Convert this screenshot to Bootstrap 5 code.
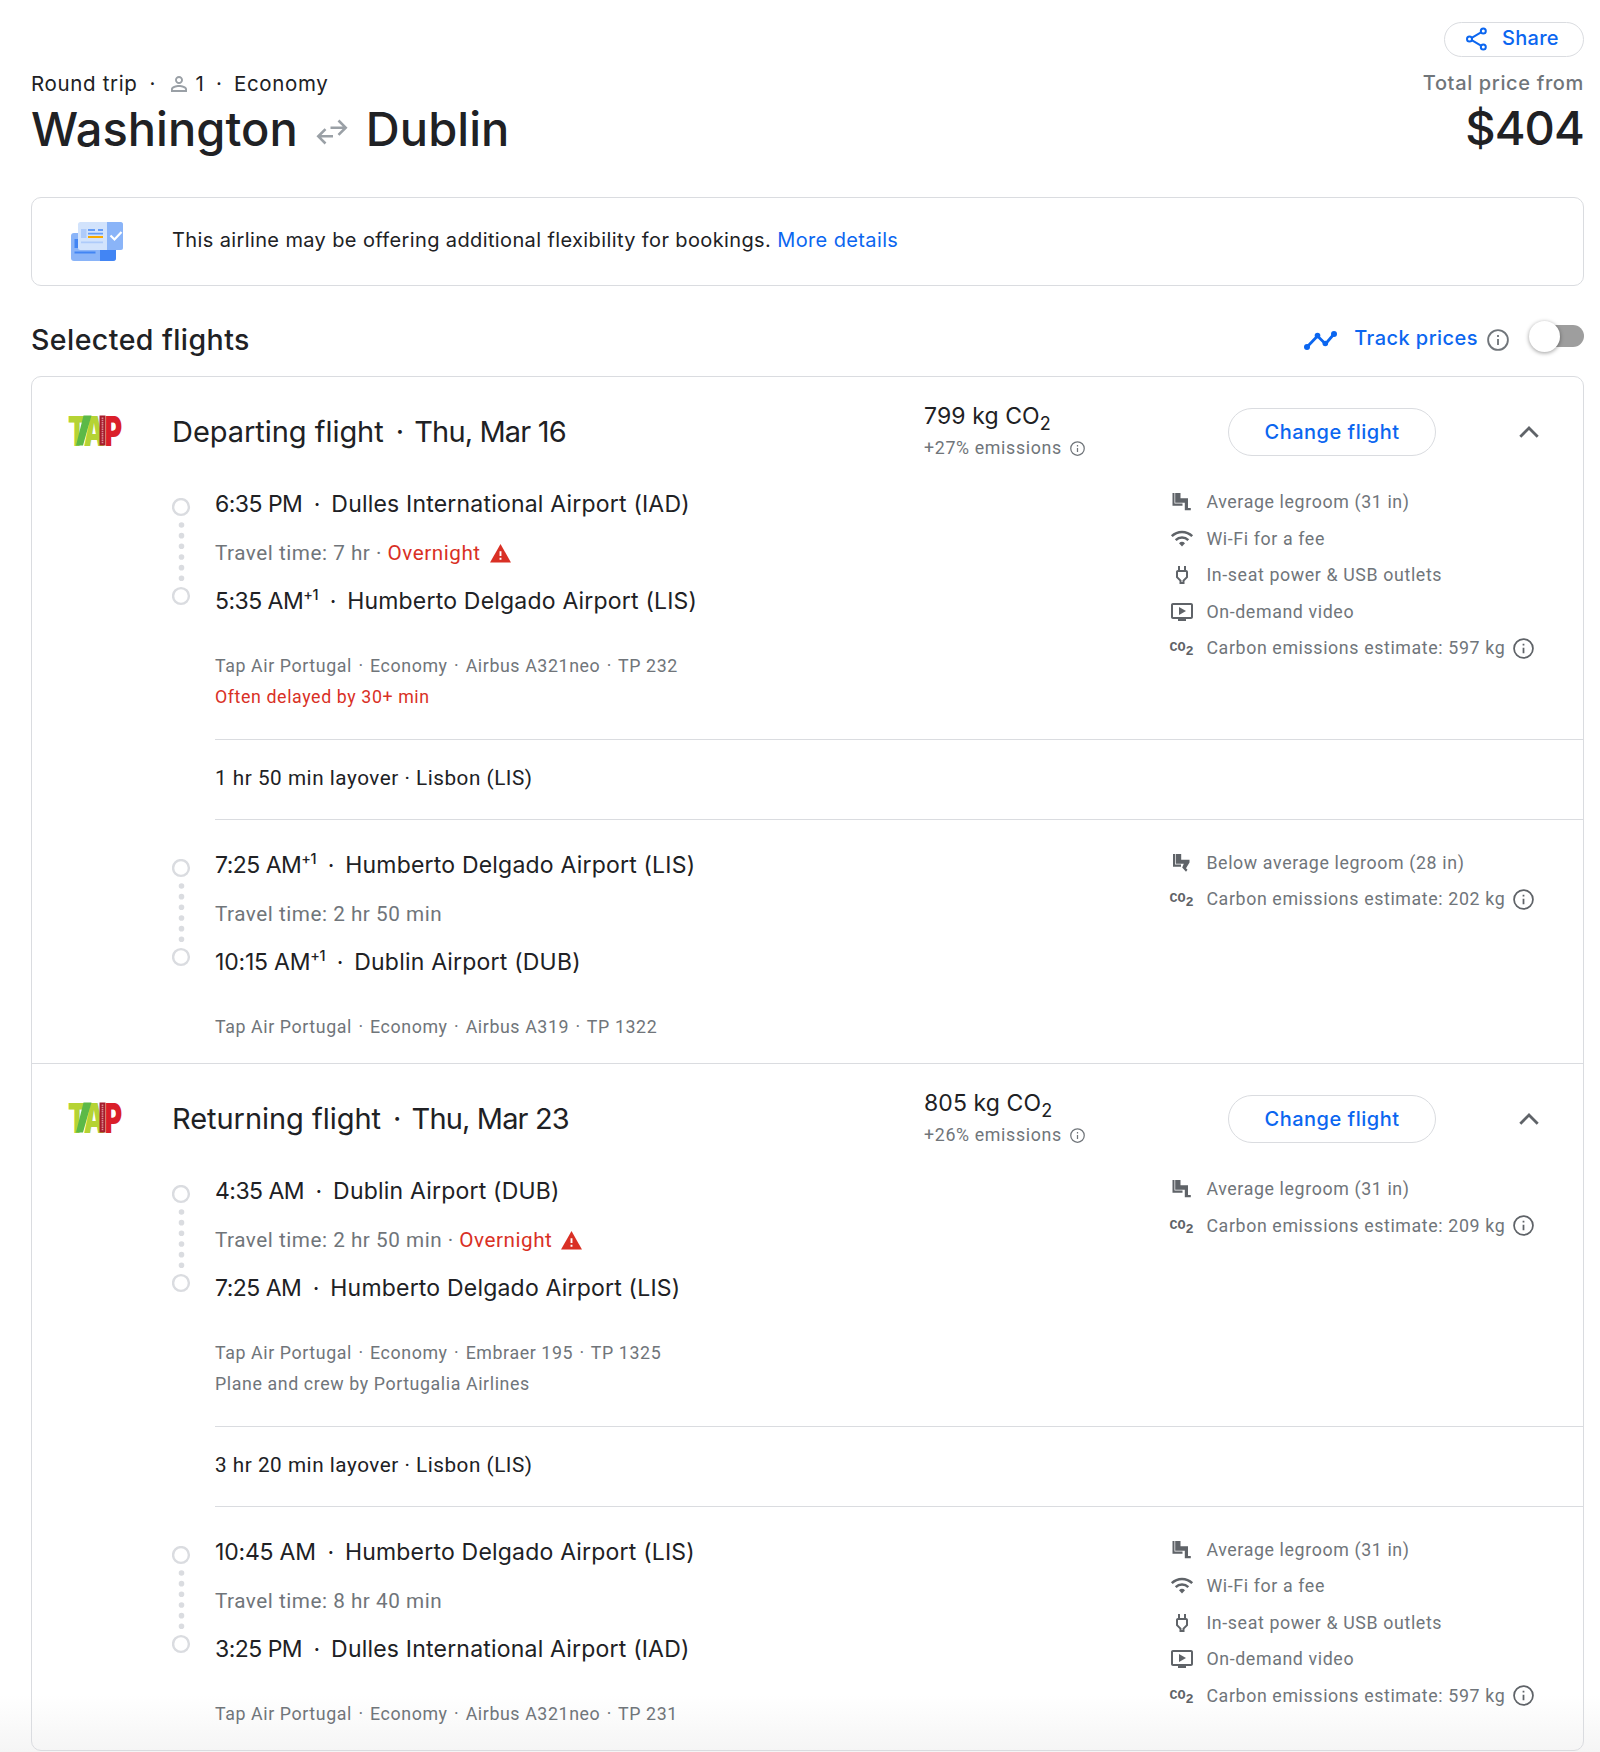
<!DOCTYPE html>
<html lang="en">
<head>
<meta charset="utf-8">
<meta name="viewport" content="width=device-width, initial-scale=1">
<title>Washington to Dublin</title>
<link href="https://cdn.jsdelivr.net/npm/bootstrap@5.3.0/dist/css/bootstrap.min.css" rel="stylesheet">
<style>
body{font-family:Roboto,"Liberation Sans",sans-serif;color:#202124;height:1752px;overflow:hidden;background:linear-gradient(#fff 1695px,#f5f5f5 1752px)}
svg{display:block;flex:none;overflow:visible}
.page{padding:0 16px 0 31px}
.gs{font-family:Inter,"Liberation Sans",sans-serif}
.sp{white-space:pre}
.blue{color:#0b66f0}
.grey{color:#70757a}
.red{color:#d93025}
.outline{border:1px solid #dadce0}
.topbar{height:158px}
.left-col{padding-top:69px}
.trip-line{font-size:20.5px;line-height:29px;height:29.5px;letter-spacing:.65px}
.trip-line .sp{letter-spacing:.2px}
.trip-line .pax{margin:3px 4px 0 0}
.big{font-size:47px;line-height:60px;font-weight:500;letter-spacing:.05px}
.big.price{letter-spacing:-.9px}
.swap{margin:20px 19px 0 19px}
.right-col{padding-top:21.5px}
.share-btn{width:140px;height:37px;border-radius:19px;padding-left:21px;font-size:20px;font-weight:500;letter-spacing:.3px}
.share-btn span{margin:-3px 0 0 15px}
.total{font-size:20px;line-height:29px;margin-top:12px;font-weight:500;letter-spacing:.64px}
.notice{margin-top:39px;height:89px;border-radius:10px;padding-left:39px;font-size:20px;line-height:30px;letter-spacing:.38px}
.notice .msg{margin:-3px 0 0 49px}
.sel{height:90px;padding-top:17px}
.sel h2{font-size:28.5px;line-height:40px;font-weight:500;letter-spacing:.45px;padding-top:17px}
.trend{margin:28px 17px 0 0}
.track-t{font-size:20px;font-weight:500;line-height:30px;margin-top:20px;letter-spacing:.45px}
.track-i{margin:26px 20px 0 9px}
.switch{width:55px;height:30px;position:relative;margin-top:18px}
.switch i{position:absolute;right:0;top:4px;width:44px;height:22px;border-radius:11px;background:#9e9e9e}
.switch b{position:absolute;left:0;top:0;width:31px;height:31px;border-radius:50%;background:#fff;box-shadow:0 1px 4px rgba(0,0,0,.4)}
.flights{border-radius:10px}
.flight{height:686px}
.flight+.flight{border-top:1px solid #dadce0;height:687px}
.head{height:109px;padding:31px 39px 0 37px}
.logo-cell{width:103px;padding-top:7px}
.logo-cell text{font:900 41px Inter,"Liberation Sans",sans-serif}
.head h3{width:752px;font-size:29px;line-height:40px;font-weight:400;letter-spacing:-.04px;padding-top:4px}
.head h3 i{font-style:normal;margin:0 2px 0 4px}
.head h3 b{font-weight:400;letter-spacing:-.85px}
.co{width:304px;padding-top:3px}
.co .kg{font-size:23px;line-height:26px;letter-spacing:.1px;margin-top:-8px}
.co .kg sub{font-size:18px;bottom:-.32em}
.pct{font-size:17.8px;line-height:30px;letter-spacing:.65px;margin-top:4px}
.change{width:208px;height:48px;border-radius:24px;font-size:20px;font-weight:500;line-height:46px;letter-spacing:.5px}
.chev{margin:17.500px 0 0 82.500px}
.seg{height:253px;padding-left:140px}
.seg.second{padding-top:26.500px;height:243px}
.track{width:43px;padding-top:12px}
.info-col{width:955px}
.stop{font-size:23px;line-height:36px;letter-spacing:.2px}
.stop>span{letter-spacing:-.53px}
.stop>.wide{letter-spacing:-.2px}
.stop>i{font-style:normal;letter-spacing:-.7px}
.stop sup{font-size:14.500px;top:-.6em;font-weight:500;letter-spacing:-.4px}
.travel{font-size:20.7px;line-height:36px;letter-spacing:.52px;margin:13px 0 12px}
.warn{margin-left:9px}
.meta{font-size:17.8px;line-height:30.7px;letter-spacing:.6px}
.meta i{font-style:normal;margin:0 1.400px}
.stop+.meta{margin-top:32px}
.lay{height:81px;margin-left:183px;border:solid #dadce0;border-width:1px 0;font-size:20.7px;line-height:77px;letter-spacing:.53px}
.am{margin-top:-2px;font-size:17.8px;letter-spacing:.62px;color:#70757a}
.am>div{height:36.5px;line-height:36.5px}
.am svg{color:#5f6368}
.am .ic{width:24px;margin:0 12px 0 .4px}
.co2{font:700 13.5px/36px "Liberation Mono",monospace;letter-spacing:0;color:#5f6368;white-space:nowrap;text-indent:-1px}
.co2 sub{font-size:13.5px;bottom:-4px;line-height:0}
</style>
</head>
<body>
<svg width="0" height="0" class="position-absolute">
<symbol id="i-info" viewBox="0 0 24 24"><circle cx="12" cy="12" r="10.8" fill="none" stroke="currentColor" stroke-width="2"/><path d="M11 11h2v6.500h-2zM11 6.500h2v2.200h-2z" fill="currentColor"/></symbol>
<symbol id="i-seat" viewBox="0 0 24 24"><path fill="currentColor" d="M2.500 3h2v10.500h8v2.200h-10zM5.200 3H10.500v5.300h7.500V18h2.800v2.200h-6v-7.500H5.200z"/></symbol>
<symbol id="i-low" viewBox="0 0 24 24"><path fill="currentColor" d="M3 3h2v10.500h6v2.200H3zM5.700 3h5.500v5.800h8.300v2.700L16 17.200l1.500 1.600L16 20.800 12.200 16.500l1.600-3.800H5.700z"/></symbol>
<symbol id="i-wifi" viewBox="0 0 24 24"><path d="M1.800 9.100a14.500 14.500 0 0 1 20.400 0M5.700 13.100a9 9 0 0 1 12.600 0" fill="none" stroke="currentColor" stroke-width="2.500"/><path d="M12 19.500l-3-3.200a4.300 4.300 0 0 1 6 0z" fill="currentColor"/></symbol>
<symbol id="i-plug" viewBox="0 0 24 24"><path fill="currentColor" d="M16 9v4.660l-3.500 3.510V19h-1v-1.830L8 13.650V9h8m0-6h-2v4h-4V3H8v4h-.01C6.900 6.990 6 7.890 6 8.980v5.520L9.500 18v3h5v-3l3.500-3.510V9c0-1.100-.9-2-2-2V3z"/></symbol>
<symbol id="i-video" viewBox="0 0 24 24"><path fill="currentColor" d="M21 3H3c-1.110 0-2 .89-2 2v12c0 1.100.89 2 2 2h5v2h8v-2h5c1.100 0 1.990-.9 1.990-2L23 5c0-1.110-.9-2-2-2zm0 14H3V5h18v12zm-5-6l-7 4V7z"/></symbol>
<symbol id="i-warn" viewBox="0 0 22 20"><path fill="#d93025" d="M11 0l11 19.500H0z"/><path fill="#fff" d="M10 7.500h2v5h-2zM10 14.500h2v2h-2z"/></symbol>
<symbol id="i-up" viewBox="0 0 20 12"><path d="M1.300 10.700L10 2l8.700 8.700" fill="none" stroke="#5f6368" stroke-width="2.800"/></symbol>
<symbol id="i-line" viewBox="0 0 20 108"><g fill="none" stroke="#dadce0" stroke-width="2.400"><circle cx="9" cy="9" r="7.900"/><circle cx="9" cy="98" r="7.900"/></g><path d="M9.500 27v54" stroke="#dadce0" stroke-width="5.600" stroke-linecap="round" stroke-dasharray="0 10.660"/></symbol>
</svg>
<main class="page">
<header class="topbar d-flex justify-content-between gs">
 <div class="left-col">
  <div class="trip-line d-flex"><span>Round trip</span><span class="sp">  ·  </span><svg class="pax" width="24" height="24" viewBox="0 0 24 24"><path fill="#9aa0a6" d="M12 5.900c1.160 0 2.100.94 2.100 2.100s-.94 2.100-2.100 2.100S9.900 9.160 9.900 8s.94-2.100 2.100-2.100m0 9c2.970 0 6.100 1.460 6.100 2.100v1.100H5.900V17c0-.64 3.130-2.100 6.100-2.100M12 4C9.790 4 8 5.790 8 8s1.790 4 4 4 4-1.790 4-4-1.790-4-4-4zm0 9c-2.670 0-8 1.340-8 4v3h16v-3c0-2.660-5.330-4-8-4z"/></svg><span class="sp">1  ·  </span><span>Economy</span></div>
  <h1 class="big m-0 d-flex">Washington<svg class="swap" width="30" height="25" viewBox="0 0 30 25"><path fill="none" stroke="#9aa0a6" stroke-width="2.600" d="M13.500 8.700H28M21.500 1.500l7.200 7.200-7.200 7.200M16 17.300H2M8.500 10.100l-7.200 7.200 7.200 7.200"/></svg>Dublin</h1>
 </div>
 <div class="right-col d-flex flex-column align-items-end">
  <a class="share-btn outline blue text-decoration-none d-flex align-items-center" href="#"><svg width="21" height="24" viewBox="0 0 21 24"><g fill="none" stroke="currentColor" stroke-width="2"><circle cx="3.500" cy="12" r="2.500"/><circle cx="17.300" cy="4" r="2.500"/><circle cx="17.300" cy="20" r="2.500"/><path d="M5.700 10.800L15 5.400M5.700 13.200l9.300 5.400"/></g></svg><span>Share</span></a>
  <div class="grey total">Total price from</div>
  <div class="big price">$404</div>
 </div>
</header>
<section class="notice outline d-flex align-items-center gs">
 <svg width="52" height="39" viewBox="0 0 52 39"><rect y="11" width="45" height="28" rx="3" fill="#8ab4f8"/><path d="M29 28h16v8a3 3 0 0 1-3 3H29z" fill="#4285f4"/><path d="M3.500 17h4v9h-4zM3.500 29.500h21v2h-21z" fill="#4285f4"/><rect x="7" width="45" height="28" rx="2.500" fill="#d2e3fc"/><path d="M36 0h13.500a2.500 2.500 0 0 1 2.500 2.500v23a2.500 2.500 0 0 1-2.500 2.500H36z" fill="#8ab4f8"/><path d="M10 7h5.500v9H10zM10 19.500h22v1.800H10z" fill="#aecbfa"/><path d="M17 7h7v2h-7zM27 7h5v2h-5zM17 10.700h15v1.800H17z" fill="#669df6"/><path d="M17 14h15v2H17z" fill="#f9ab00"/><path d="M39.500 13.500l4 4 7-7.500" fill="none" stroke="#fff" stroke-width="2.200"/></svg>
 <div class="msg">This airline may be offering additional flexibility for bookings. <a href="#" class="blue text-decoration-none">More details</a></div>
</section>
<section class="sel d-flex gs">
 <h2 class="m-0 flex-grow-1">Selected flights</h2>
 <svg width="33" height="19" viewBox="0 0 33 19" class="blue trend"><path d="M3 16L13.500 5l8 8L30 3" fill="none" stroke="currentColor" stroke-width="2.800"/><g fill="currentColor"><circle cx="3" cy="16" r="3"/><circle cx="13.500" cy="4.500" r="2.800"/><circle cx="21.300" cy="12.500" r="2.800"/><circle cx="30" cy="3" r="3"/></g></svg>
 <span class="blue track-t">Track prices</span>
 <svg class="grey track-i" width="22" height="22"><use href="#i-info"/></svg>
 <div class="switch"><i></i><b></b></div>
</section>
<section class="flights outline">
<article class="flight">
 <div class="head d-flex">
  <div class="logo-cell"><svg width="53" height="31" viewBox="0 0 53 31"><text x="-1" y="30.500" textLength="54" lengthAdjust="spacingAndGlyphs"><tspan fill="#b5d334">TA</tspan><tspan fill="#da1f2a">P</tspan></text><path fill="#5cb947" d="M14.500.5h8L14 30.500H7z"/><path fill="#a51c2c" d="M30.500.5h6v30h-6z"/><path d="M33.500 2.500v26" stroke="#dc8b93" stroke-width="1.700" stroke-dasharray="1.500 .7"/></svg></div>
  <h3 class="gs m-0 sp">Departing flight<i> · </i><b>Thu, Mar 16</b></h3>
  <div class="co"><div class="kg gs">799 kg CO<sub>2</sub></div><div class="pct grey d-flex align-items-center">+27% emissions<svg width="15" height="15" class="ms-2"><use href="#i-info"/></svg></div></div>
  <a href="#" class="change outline gs blue text-center text-decoration-none">Change flight</a>
  <svg class="chev" width="20" height="12"><use href="#i-up"/></svg>
 </div>
 <div class="seg d-flex">
  <div class="track"><svg width="20" height="108"><use href="#i-line"/></svg></div>
  <div class="info-col"><div class="stop gs sp"><span>6:35 PM</span><i>  ·  </i>Dulles International Airport (IAD)</div><div class="travel grey d-flex align-items-center">Travel time: 7 hr ·&nbsp;<span class="red">Overnight</span><svg class="warn" width="21" height="19"><use href="#i-warn"/></svg></div><div class="stop gs sp"><span>5:35 AM</span><sup>+1</sup><i>  ·  </i>Humberto Delgado Airport (LIS)</div><div class="meta grey">Tap Air Portugal <i>·</i> Economy <i>·</i> Airbus A321neo <i>·</i> TP 232<br><span class="red">Often delayed by 30+ min</span></div></div>
  <div class="am">
   <div class="d-flex align-items-center"><svg class="ic" height="24"><use href="#i-seat"/></svg>Average legroom (31 in)</div>
   <div class="d-flex align-items-center"><svg class="ic" height="24"><use href="#i-wifi"/></svg>Wi-Fi for a fee</div>
   <div class="d-flex align-items-center"><svg class="ic" height="24"><use href="#i-plug"/></svg>In-seat power &amp; USB outlets</div>
   <div class="d-flex align-items-center"><svg class="ic" height="24"><use href="#i-video"/></svg>On-demand video</div>
   <div class="d-flex align-items-center"><span class="ic co2">CO<sub>2</sub></span>Carbon emissions estimate: 597 kg<svg width="21" height="21" class="ms-2"><use href="#i-info"/></svg></div>
  </div>
 </div>
 <div class="lay">1 hr 50 min layover · Lisbon (LIS)</div>
 <div class="seg second d-flex">
  <div class="track"><svg width="20" height="108"><use href="#i-line"/></svg></div>
  <div class="info-col"><div class="stop gs sp"><span>7:25 AM</span><sup>+1</sup><i>  ·  </i>Humberto Delgado Airport (LIS)</div><div class="travel grey">Travel time: 2 hr 50 min</div><div class="stop gs sp"><span class="wide">10:15 AM</span><sup>+1</sup><i>  ·  </i>Dublin Airport (DUB)</div><div class="meta grey">Tap Air Portugal <i>·</i> Economy <i>·</i> Airbus A319 <i>·</i> TP 1322</div></div>
  <div class="am">
   <div class="d-flex align-items-center"><svg class="ic" height="24"><use href="#i-low"/></svg>Below average legroom (28 in)</div>
   <div class="d-flex align-items-center"><span class="ic co2">CO<sub>2</sub></span>Carbon emissions estimate: 202 kg<svg width="21" height="21" class="ms-2"><use href="#i-info"/></svg></div>
  </div>
 </div>
</article>
<article class="flight">
 <div class="head d-flex">
  <div class="logo-cell"><svg width="53" height="31" viewBox="0 0 53 31"><text x="-1" y="30.500" textLength="54" lengthAdjust="spacingAndGlyphs"><tspan fill="#b5d334">TA</tspan><tspan fill="#da1f2a">P</tspan></text><path fill="#5cb947" d="M14.500.5h8L14 30.500H7z"/><path fill="#a51c2c" d="M30.500.5h6v30h-6z"/><path d="M33.500 2.500v26" stroke="#dc8b93" stroke-width="1.700" stroke-dasharray="1.500 .7"/></svg></div>
  <h3 class="gs m-0 sp">Returning flight<i> · </i><b>Thu, Mar 23</b></h3>
  <div class="co"><div class="kg gs">805 kg CO<sub>2</sub></div><div class="pct grey d-flex align-items-center">+26% emissions<svg width="15" height="15" class="ms-2"><use href="#i-info"/></svg></div></div>
  <a href="#" class="change outline gs blue text-center text-decoration-none">Change flight</a>
  <svg class="chev" width="20" height="12"><use href="#i-up"/></svg>
 </div>
 <div class="seg d-flex">
  <div class="track"><svg width="20" height="108"><use href="#i-line"/></svg></div>
  <div class="info-col"><div class="stop gs sp"><span>4:35 AM</span><i>  ·  </i>Dublin Airport (DUB)</div><div class="travel grey d-flex align-items-center">Travel time: 2 hr 50 min ·&nbsp;<span class="red">Overnight</span><svg class="warn" width="21" height="19"><use href="#i-warn"/></svg></div><div class="stop gs sp"><span>7:25 AM</span><i>  ·  </i>Humberto Delgado Airport (LIS)</div><div class="meta grey">Tap Air Portugal <i>·</i> Economy <i>·</i> Embraer 195 <i>·</i> TP 1325<br>Plane and crew by Portugalia Airlines</div></div>
  <div class="am">
   <div class="d-flex align-items-center"><svg class="ic" height="24"><use href="#i-seat"/></svg>Average legroom (31 in)</div>
   <div class="d-flex align-items-center"><span class="ic co2">CO<sub>2</sub></span>Carbon emissions estimate: 209 kg<svg width="21" height="21" class="ms-2"><use href="#i-info"/></svg></div>
  </div>
 </div>
 <div class="lay">3 hr 20 min layover · Lisbon (LIS)</div>
 <div class="seg second d-flex">
  <div class="track"><svg width="20" height="108"><use href="#i-line"/></svg></div>
  <div class="info-col"><div class="stop gs sp"><span class="wide">10:45 AM</span><i>  ·  </i>Humberto Delgado Airport (LIS)</div><div class="travel grey">Travel time: 8 hr 40 min</div><div class="stop gs sp"><span>3:25 PM</span><i>  ·  </i>Dulles International Airport (IAD)</div><div class="meta grey">Tap Air Portugal <i>·</i> Economy <i>·</i> Airbus A321neo <i>·</i> TP 231</div></div>
  <div class="am">
   <div class="d-flex align-items-center"><svg class="ic" height="24"><use href="#i-seat"/></svg>Average legroom (31 in)</div>
   <div class="d-flex align-items-center"><svg class="ic" height="24"><use href="#i-wifi"/></svg>Wi-Fi for a fee</div>
   <div class="d-flex align-items-center"><svg class="ic" height="24"><use href="#i-plug"/></svg>In-seat power &amp; USB outlets</div>
   <div class="d-flex align-items-center"><svg class="ic" height="24"><use href="#i-video"/></svg>On-demand video</div>
   <div class="d-flex align-items-center"><span class="ic co2">CO<sub>2</sub></span>Carbon emissions estimate: 597 kg<svg width="21" height="21" class="ms-2"><use href="#i-info"/></svg></div>
  </div>
 </div>
</article>
</section>
</main>
<script src="https://cdn.jsdelivr.net/npm/bootstrap@5.3.0/dist/js/bootstrap.bundle.min.js"></script>
</body>
</html>
